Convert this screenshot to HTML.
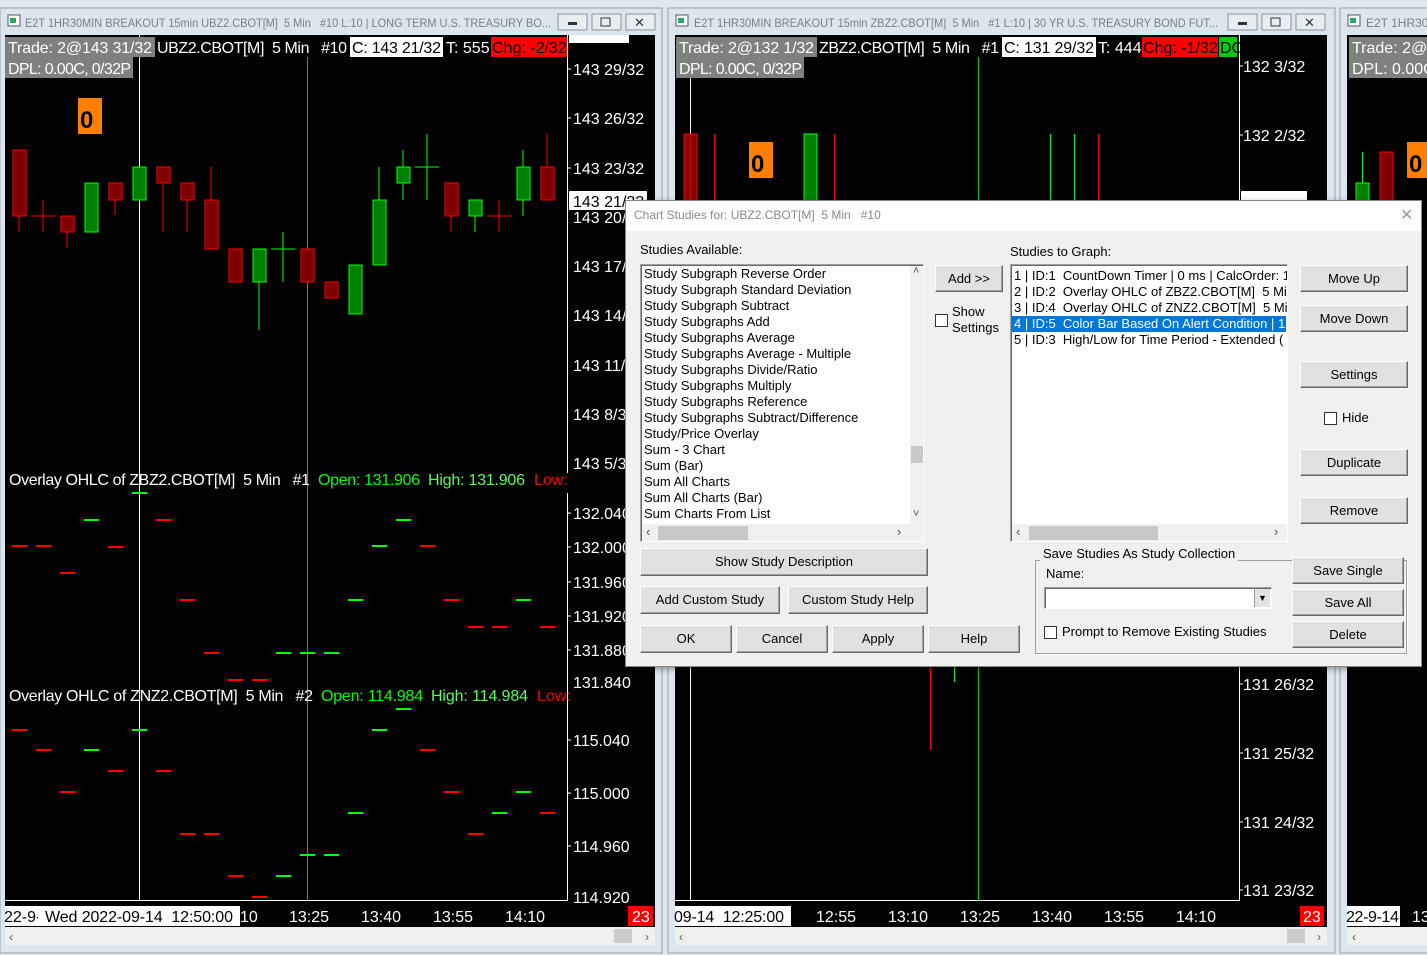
<!DOCTYPE html>
<html><head><meta charset="utf-8"><style>
body{margin:0;width:1427px;height:955px;overflow:hidden;background:#dfe6ee;font-family:"Liberation Sans",sans-serif;position:relative}
svg{position:absolute;left:0;top:0}
svg text{white-space:pre}
.dlg{position:absolute;left:625px;top:200px;width:795px;height:465px;background:#f0f0f0;border:1px solid #888;box-shadow:2px 2px 6px rgba(0,0,0,.4);font-size:13px;color:#000}
.dlg .tb{position:absolute;left:0;top:0;width:795px;height:30px;background:#fff}
.a{position:absolute;white-space:pre}
.btn{position:absolute;background:#e1e1e1;border:1px solid;border-color:#fff #696969 #696969 #fff;box-shadow:inset -1px -1px 0 #a0a0a0;text-align:center;box-sizing:border-box;font-size:13px}
.lb{position:absolute;background:#fff;border:1px solid;border-color:#a0a0a0 #fff #fff #a0a0a0;box-shadow:inset 1px 1px 0 #696969;box-sizing:border-box;overflow:hidden}
.cb{position:absolute;width:11px;height:11px;border:1px solid #333;background:#fff}
.it{position:absolute;left:3px;height:16px;line-height:16px;white-space:pre}
</style></head><body>
<svg width="1427" height="955" font-family="Liberation Sans, sans-serif">
<!-- LEFT WINDOW -->
<rect x="0" y="8" width="662" height="945" fill="#dde6ef" stroke="#9aa3ad"/>
<rect x="8" y="15" width="12" height="11" fill="#fff" stroke="#556"/><rect x="10" y="18" width="6" height="5" fill="#2a6"/>
<text x="25" y="27" font-size="12" fill="#7a7f86" textLength="526" lengthAdjust="spacingAndGlyphs">E2T 1HR30MIN BREAKOUT 15min UBZ2.CBOT[M]  5 Min   #10 L:10 | LONG TERM U.S. TREASURY BO...</text>
<g fill="#e8edf2" stroke="#8a929a"><rect x="558" y="14" width="29" height="16"/><rect x="592" y="14" width="29" height="16"/><rect x="626" y="14" width="29" height="16"/></g>
<rect x="568" y="22" width="9" height="3" fill="#333"/><rect x="601" y="18" width="9" height="8" fill="none" stroke="#333"/><text x="634" y="27" font-size="13" fill="#333">✕</text>
<rect x="5" y="35" width="650" height="892" fill="#000"/>
<rect x="5" y="927" width="650" height="18" fill="#f0f0f0"/><rect x="614" y="929" width="18" height="14" fill="#ccc"/>
<text x="9" y="941" font-size="12" fill="#555">‹</text><text x="645" y="941" font-size="12" fill="#555">›</text>
<line x1="567.5" y1="35" x2="567.5" y2="901" stroke="#fff"/>
<line x1="5" y1="900.5" x2="567" y2="900.5" stroke="#fff"/>
<line x1="139.5" y1="35" x2="139.5" y2="901" stroke="#fff"/>
<line x1="307.5" y1="57" x2="307.5" y2="901" stroke="#0c0"/>
<g stroke="#f00"><line x1="19" y1="150" x2="19" y2="232"/><line x1="43" y1="200" x2="43" y2="232"/><line x1="31" y1="216" x2="55" y2="216"/><line x1="67" y1="216" x2="67" y2="248"/><line x1="115" y1="183" x2="115" y2="215"/><line x1="163" y1="167" x2="163" y2="232"/><line x1="187" y1="183" x2="187" y2="232"/><line x1="211" y1="167" x2="211" y2="249"/><line x1="235" y1="249" x2="235" y2="282"/><line x1="307" y1="249" x2="307" y2="282"/><line x1="331" y1="282" x2="331" y2="298"/><line x1="451" y1="183" x2="451" y2="232"/><line x1="499" y1="200" x2="499" y2="232"/><line x1="487" y1="216" x2="511" y2="216"/><line x1="547" y1="134" x2="547" y2="200"/></g>
<g stroke="#0f0"><line x1="259" y1="249" x2="259" y2="330"/><line x1="283" y1="232" x2="283" y2="282"/><line x1="271" y1="249" x2="295" y2="249"/><line x1="379" y1="167" x2="379" y2="265"/><line x1="403" y1="150" x2="403" y2="200"/><line x1="427" y1="134" x2="427" y2="200"/><line x1="415" y1="167" x2="439" y2="167"/><line x1="475" y1="200" x2="475" y2="232"/><line x1="523" y1="150" x2="523" y2="216"/></g>
<g fill="#800000" stroke="#f00"><rect x="13" y="150" width="13" height="66"/><rect x="61" y="216" width="13" height="16"/><rect x="109" y="183" width="13" height="17"/><rect x="157" y="167" width="13" height="16"/><rect x="181" y="183" width="13" height="17"/><rect x="205" y="200" width="13" height="49"/><rect x="229" y="249" width="13" height="33"/><rect x="301" y="249" width="13" height="33"/><rect x="325" y="282" width="13" height="16"/><rect x="445" y="183" width="13" height="33"/><rect x="541" y="167" width="13" height="33"/></g>
<g fill="#008000" stroke="#0f0"><rect x="85" y="183" width="13" height="49"/><rect x="133" y="167" width="13" height="33"/><rect x="253" y="249" width="13" height="33"/><rect x="349" y="265" width="13" height="49"/><rect x="373" y="200" width="13" height="65"/><rect x="397" y="167" width="13" height="16"/><rect x="469" y="200" width="13" height="16"/><rect x="517" y="167" width="13" height="33"/></g>
<rect x="78" y="98" width="24" height="36" fill="#ff8000"/><text x="80" y="128" font-size="24" font-weight="bold">0</text>
<g font-size="16" fill="#fff">
<rect x="5" y="37" width="150" height="20" fill="#808080"/><text x="8" y="53" textLength="144">Trade: 2@143 31/32</text>
<text x="157" y="53" textLength="190">UBZ2.CBOT[M]  5 Min   #10</text>
<rect x="350" y="37" width="93" height="20" fill="#fff"/><text x="352" y="53" fill="#000" textLength="89">C: 143 21/32</text>
<text x="446" y="53">T: 555</text>
<rect x="491" y="37" width="76" height="20" fill="#f00"/><text x="492" y="53" fill="#000">Chg: -2/32</text>
<rect x="5" y="57" width="128" height="21" fill="#808080"/><text x="8" y="74" textLength="123">DPL: 0.00C, 0/32P</text>
<text x="9" y="485" textLength="301">Overlay OHLC of ZBZ2.CBOT[M]  5 Min   #1</text>
<text x="318" y="485" fill="#0f0" textLength="102">Open: 131.906</text>
<text x="428" y="485" fill="#5f5" textLength="97">High: 131.906</text>
<text x="534" y="485" fill="#f00">Low:</text>
<text x="9" y="701" textLength="304">Overlay OHLC of ZNZ2.CBOT[M]  5 Min   #2</text>
<text x="321" y="701" fill="#0f0" textLength="102">Open: 114.984</text>
<text x="431" y="701" fill="#5f5" textLength="97">High: 114.984</text>
<text x="537" y="701" fill="#f00">Low:</text>
<rect x="567" y="470" width="0" height="0"/>
<rect x="569" y="35" width="60" height="8" fill="#fff"/>
<text x="573" y="75">143 29/32</text><text x="573" y="124">143 26/32</text><text x="573" y="174">143 23/32</text>
<rect x="569" y="191" width="78" height="19" fill="#fff"/><text x="573" y="207" fill="#000">143 21/32</text>
<text x="573" y="223">143 20/</text><text x="573" y="272">143 17/</text><text x="573" y="321">143 14/</text><text x="573" y="371">143 11/</text><text x="573" y="420">143 8/3</text><text x="573" y="469">143 5/3</text>
<text x="573" y="519">132.040</text><text x="573" y="553">132.000</text><text x="573" y="588">131.960</text><text x="573" y="622">131.920</text><text x="573" y="656">131.880</text><text x="573" y="688">131.840</text>
<text x="573" y="746">115.040</text><text x="573" y="799">115.000</text><text x="573" y="852">114.960</text><text x="573" y="903">114.920</text>
<rect x="5" y="906" width="33" height="20" fill="#fff"/><text x="4" y="922" fill="#000">22-9-</text>
<rect x="38" y="906" width="202" height="20" fill="#fff"/><text x="45" y="922" fill="#000" textLength="188">Wed 2022-09-14  12:50:00</text>
<text x="240" y="922">10</text><text x="289" y="922">13:25</text><text x="361" y="922">13:40</text><text x="433" y="922">13:55</text><text x="505" y="922">14:10</text>
<rect x="628" y="906" width="25" height="20" fill="#f00"/><text x="632" y="922">23</text>
</g>
<rect x="567" y="473" width="1" height="20" fill="#000"/>
<g stroke="#fff"><line x1="567" y1="69" x2="571" y2="69"/><line x1="567" y1="118" x2="571" y2="118"/><line x1="567" y1="168" x2="571" y2="168"/><line x1="567" y1="513" x2="571" y2="513"/><line x1="567" y1="547" x2="571" y2="547"/><line x1="567" y1="582" x2="571" y2="582"/><line x1="567" y1="616" x2="571" y2="616"/><line x1="567" y1="650" x2="571" y2="650"/><line x1="567" y1="740" x2="571" y2="740"/><line x1="567" y1="793" x2="571" y2="793"/><line x1="567" y1="846" x2="571" y2="846"/></g>
<g stroke="#f00" stroke-width="2"><path d="M12 546h15M36 546h15M108 547h15M60 573h15M156 520h15M180 600h15M204 653h15M420 546h15M444 600h15M468 627h15M492 627h15M540 627h15"/>
<path d="M12 730h15M36 750h15M108 771h15M156 771h15M60 792h15M180 834h15M204 834h15M228 876h15M252 897h15M228 680h15M252 680h15M420 750h15M444 792h15M468 834h15M540 813h15"/></g>
<g stroke="#0f0" stroke-width="2"><path d="M84 520h15M132 493h15M276 653h15M300 653h15M324 653h15M348 600h15M396 520h15M372 546h15M516 600h15"/>
<path d="M84 750h15M132 730h15M300 855h15M324 855h15M276 876h15M348 813h15M372 730h15M396 709h15M492 813h15M516 792h15"/></g>

<!-- MIDDLE WINDOW -->
<rect x="668" y="8" width="667" height="945" fill="#dde6ef" stroke="#9aa3ad"/>
<rect x="676" y="15" width="12" height="11" fill="#fff" stroke="#556"/><rect x="678" y="18" width="6" height="5" fill="#2a6"/>
<text x="694" y="27" font-size="12" fill="#7a7f86" textLength="524" lengthAdjust="spacingAndGlyphs">E2T 1HR30MIN BREAKOUT 15min ZBZ2.CBOT[M]  5 Min   #1 L:10 | 30 YR U.S. TREASURY BOND FUT...</text>
<g fill="#e8edf2" stroke="#8a929a"><rect x="1228" y="14" width="29" height="16"/><rect x="1262" y="14" width="29" height="16"/><rect x="1296" y="14" width="29" height="16"/></g>
<rect x="1238" y="22" width="9" height="3" fill="#333"/><rect x="1271" y="18" width="9" height="8" fill="none" stroke="#333"/><text x="1304" y="27" font-size="13" fill="#333">✕</text>
<rect x="675" y="35" width="652" height="892" fill="#000"/>
<rect x="675" y="927" width="652" height="18" fill="#f0f0f0"/><rect x="1287" y="929" width="18" height="14" fill="#ccc"/>
<text x="679" y="941" font-size="12" fill="#555">‹</text><text x="1317" y="941" font-size="12" fill="#555">›</text>
<line x1="1239.5" y1="35" x2="1239.5" y2="901" stroke="#fff"/>
<line x1="675" y1="900.5" x2="1239" y2="900.5" stroke="#fff"/>
<line x1="690.5" y1="78" x2="690.5" y2="901" stroke="#fff"/>
<line x1="978.5" y1="57" x2="978.5" y2="901" stroke="#0c0"/>
<line x1="930.5" y1="660" x2="930.5" y2="750" stroke="#f00"/><line x1="954.5" y1="660" x2="954.5" y2="682" stroke="#0f0"/>
<g stroke="#f00"><line x1="714.5" y1="134" x2="714.5" y2="200"/><line x1="834.5" y1="134" x2="834.5" y2="200"/><line x1="1098.5" y1="134" x2="1098.5" y2="200"/></g>
<g stroke="#0f0"><line x1="1050.5" y1="134" x2="1050.5" y2="200"/><line x1="1074.5" y1="134" x2="1074.5" y2="200"/></g>
<rect x="684" y="134" width="13" height="70" fill="#800000" stroke="#f00"/><line x1="690" y1="134" x2="690" y2="200" stroke="#f00"/>
<rect x="804" y="134" width="13" height="70" fill="#008000" stroke="#0f0"/>
<rect x="749" y="142" width="24" height="36" fill="#ff8000"/><text x="751" y="172" font-size="24" font-weight="bold">0</text>
<g font-size="16" fill="#fff">
<rect x="676" y="37" width="141" height="20" fill="#808080"/><text x="679" y="53" textLength="135">Trade: 2@132 1/32</text>
<text x="819" y="53" textLength="180">ZBZ2.CBOT[M]  5 Min   #1</text>
<rect x="1002" y="37" width="94" height="20" fill="#fff"/><text x="1004" y="53" fill="#000" textLength="90">C: 131 29/32</text>
<text x="1098" y="53">T: 444</text>
<rect x="1142" y="37" width="76" height="20" fill="#f00"/><text x="1143" y="53" fill="#000">Chg: -1/32</text>
<rect x="1219" y="37" width="18" height="20" fill="#0c0"/><text x="1220" y="53" fill="#000">DC</text>
<rect x="676" y="57" width="128" height="21" fill="#808080"/><text x="679" y="74" textLength="123">DPL: 0.00C, 0/32P</text>
<text x="1243" y="72">132 3/32</text><text x="1243" y="141">132 2/32</text>
<rect x="1241" y="191" width="66" height="12" fill="#fff"/>
<text x="1243" y="690">131 26/32</text><text x="1243" y="759">131 25/32</text><text x="1243" y="828">131 24/32</text><text x="1243" y="896">131 23/32</text>
<rect x="675" y="906" width="116" height="20" fill="#fff"/><text x="674" y="922" fill="#000" textLength="110">09-14  12:25:00</text>
<text x="816" y="922">12:55</text><text x="888" y="922">13:10</text><text x="960" y="922">13:25</text><text x="1032" y="922">13:40</text><text x="1104" y="922">13:55</text><text x="1176" y="922">14:10</text>
<rect x="1300" y="906" width="24" height="20" fill="#f00"/><text x="1303" y="922">23</text>
</g>
<g stroke="#fff"><line x1="1239" y1="66" x2="1243" y2="66"/><line x1="1239" y1="135" x2="1243" y2="135"/><line x1="1239" y1="684" x2="1243" y2="684"/><line x1="1239" y1="753" x2="1243" y2="753"/><line x1="1239" y1="822" x2="1243" y2="822"/><line x1="1239" y1="890" x2="1243" y2="890"/></g>

<!-- RIGHT WINDOW -->
<rect x="1340" y="8" width="90" height="945" fill="#dde6ef" stroke="#9aa3ad"/>
<rect x="1348" y="15" width="12" height="11" fill="#fff" stroke="#556"/><rect x="1350" y="18" width="6" height="5" fill="#2a6"/>
<text x="1366" y="27" font-size="12" fill="#7a7f86">E2T 1HR30MIN</text>
<rect x="1347" y="35" width="80" height="892" fill="#000"/>
<rect x="1347" y="927" width="80" height="18" fill="#f0f0f0"/><text x="1352" y="941" font-size="12" fill="#555">‹</text>
<line x1="1362.5" y1="152" x2="1362.5" y2="200" stroke="#0f0"/>
<rect x="1356" y="183" width="13" height="20" fill="#008000" stroke="#0f0"/>
<rect x="1380" y="152" width="13" height="50" fill="#800000" stroke="#f00"/>
<rect x="1407" y="142" width="20" height="36" fill="#ff8000"/><text x="1409" y="172" font-size="24" font-weight="bold">0</text>
<g font-size="16" fill="#fff">
<rect x="1349" y="37" width="78" height="20" fill="#808080"/><text x="1352" y="53">Trade: 2@1</text>
<rect x="1349" y="57" width="78" height="21" fill="#808080"/><text x="1352" y="74">DPL: 0.00C</text>
<rect x="1347" y="906" width="53" height="20" fill="#fff"/><text x="1346" y="922" fill="#000" textLength="53">22-9-14</text>
<text x="1412" y="922">13</text>
</g>
</svg>

<div class="dlg">
 <div class="tb"><span class="a" style="left:8px;top:7px;font-size:12px;color:#8a8a8a">Chart Studies for: UBZ2.CBOT[M]  5 Min   #10</span><span class="a" style="left:774px;top:4px;font-size:16px;color:#999">✕</span></div>
 <span class="a" style="left:14px;top:41px">Studies Available:</span>
 <div class="lb" style="left:14px;top:63px;width:284px;height:278px">
  <div class="it" style="top:1px">Study Subgraph Reverse Order</div>
  <div class="it" style="top:17px">Study Subgraph Standard Deviation</div>
  <div class="it" style="top:33px">Study Subgraph Subtract</div>
  <div class="it" style="top:49px">Study Subgraphs Add</div>
  <div class="it" style="top:65px">Study Subgraphs Average</div>
  <div class="it" style="top:81px">Study Subgraphs Average - Multiple</div>
  <div class="it" style="top:97px">Study Subgraphs Divide/Ratio</div>
  <div class="it" style="top:113px">Study Subgraphs Multiply</div>
  <div class="it" style="top:129px">Study Subgraphs Reference</div>
  <div class="it" style="top:145px">Study Subgraphs Subtract/Difference</div>
  <div class="it" style="top:161px">Study/Price Overlay</div>
  <div class="it" style="top:177px">Sum - 3 Chart</div>
  <div class="it" style="top:193px">Sum (Bar)</div>
  <div class="it" style="top:209px">Sum All Charts</div>
  <div class="it" style="top:225px">Sum All Charts (Bar)</div>
  <div class="it" style="top:241px">Sum Charts From List</div>
  <div style="position:absolute;left:269px;top:1px;width:14px;height:258px;background:#f0f0f0"></div>
  <div style="position:absolute;left:270px;top:181px;width:13px;height:17px;background:#c8c8c8"></div>
  <span class="a" style="left:272px;top:0;font-size:11px;color:#555">˄</span><span class="a" style="left:272px;top:243px;font-size:11px;color:#555">˅</span>
  <div style="position:absolute;left:1px;top:259px;width:282px;height:17px;background:#f0f0f0"></div>
  <div style="position:absolute;left:17px;top:261px;width:90px;height:14px;background:#c8c8c8"></div>
  <span class="a" style="left:5px;top:259px;color:#555">‹</span><span class="a" style="left:256px;top:259px;color:#555">›</span>
 </div>
 <div class="btn" style="left:309px;top:64px;width:68px;height:27px;line-height:25px">Add &gt;&gt;</div>
 <div class="cb" style="left:309px;top:113px"></div>
 <span class="a" style="left:326px;top:103px;line-height:16px">Show<br>Settings</span>
 <span class="a" style="left:384px;top:43px">Studies to Graph:</span>
 <div class="lb" style="left:384px;top:63px;width:278px;height:278px">
  <div class="it" style="top:3px">1 | ID:1  CountDown Timer | 0 ms | CalcOrder: 1</div>
  <div class="it" style="top:19px">2 | ID:2  Overlay OHLC of ZBZ2.CBOT[M]  5 Min</div>
  <div class="it" style="top:35px">3 | ID:4  Overlay OHLC of ZNZ2.CBOT[M]  5 Min</div>
  <div class="it" style="top:51px;left:1px;width:272px;padding-left:2px;background:#0078d7;color:#fff">4 | ID:5  Color Bar Based On Alert Condition | 1</div>
  <div class="it" style="top:67px">5 | ID:3  High/Low for Time Period - Extended (</div>
  <div style="position:absolute;left:1px;top:259px;width:276px;height:17px;background:#f0f0f0"></div>
  <div style="position:absolute;left:18px;top:261px;width:129px;height:14px;background:#c8c8c8"></div>
  <span class="a" style="left:5px;top:259px;color:#555">‹</span><span class="a" style="left:263px;top:259px;color:#555">›</span>
 </div>
 <div class="btn" style="left:674px;top:64px;width:108px;height:27px;line-height:25px">Move Up</div>
 <div class="btn" style="left:674px;top:104px;width:108px;height:27px;line-height:25px">Move Down</div>
 <div class="btn" style="left:674px;top:160px;width:108px;height:27px;line-height:25px">Settings</div>
 <div class="cb" style="left:698px;top:211px"></div><span class="a" style="left:716px;top:209px">Hide</span>
 <div class="btn" style="left:674px;top:248px;width:108px;height:27px;line-height:25px">Duplicate</div>
 <div class="btn" style="left:674px;top:296px;width:108px;height:27px;line-height:25px">Remove</div>
 <div class="btn" style="left:14px;top:347px;width:288px;height:28px;line-height:26px">Show Study Description</div>
 <div class="btn" style="left:14px;top:385px;width:140px;height:28px;line-height:26px">Add Custom Study</div>
 <div class="btn" style="left:162px;top:385px;width:140px;height:28px;line-height:26px">Custom Study Help</div>
 <div class="btn" style="left:14px;top:424px;width:92px;height:28px;line-height:26px">OK</div>
 <div class="btn" style="left:110px;top:424px;width:92px;height:28px;line-height:26px">Cancel</div>
 <div class="btn" style="left:206px;top:424px;width:92px;height:28px;line-height:26px">Apply</div>
 <div class="btn" style="left:302px;top:424px;width:92px;height:28px;line-height:26px">Help</div>
 <div style="position:absolute;left:409px;top:359px;width:370px;height:92px;border:1px solid #a0a0a0;box-shadow:1px 1px 0 #fff"></div>
 <span class="a" style="left:414px;top:345px;background:#f0f0f0;padding:0 3px">Save Studies As Study Collection</span>
 <span class="a" style="left:420px;top:365px">Name:</span>
 <div class="lb" style="left:418px;top:386px;width:228px;height:22px"><div style="position:absolute;right:1px;top:1px;width:15px;height:18px;background:#e1e1e1;border-left:1px solid #a0a0a0;font-size:9px;text-align:center;line-height:18px">▼</div></div>
 <div class="cb" style="left:418px;top:425px"></div><span class="a" style="left:436px;top:423px">Prompt to Remove Existing Studies</span>
 <div class="btn" style="left:666px;top:356px;width:112px;height:27px;line-height:25px">Save Single</div>
 <div class="btn" style="left:666px;top:388px;width:112px;height:27px;line-height:25px">Save All</div>
 <div class="btn" style="left:666px;top:420px;width:112px;height:27px;line-height:25px">Delete</div>
</div>
</body></html>
